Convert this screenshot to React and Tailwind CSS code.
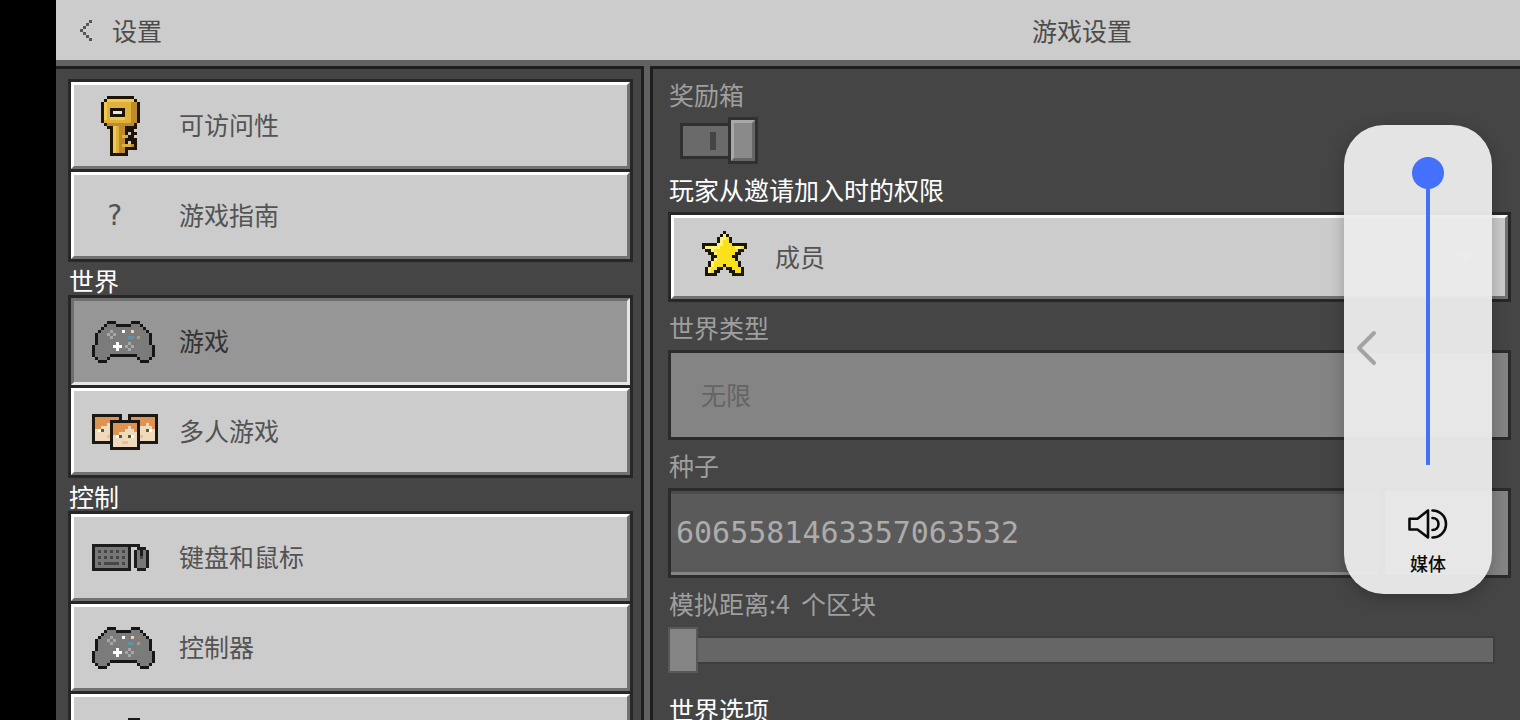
import { useState } from 'react'

const KEY = [
  '.....KKKKKKKKK..',
  '....KyyyyyyyyyK.',
  '...KyYYYYYYYYooK',
  '...KyYYYYYYYYooK',
  '...KyYKKKKKYYooK',
  '...KyYKWWWKYYooK',
  '...KyYKKKKKYYooK',
  '...KyYyyyyyYYooK',
  '...KYYYYYYYYYooK',
  '....KoooooooooK.',
  '.....KKyYooKKKK.',
  '......KyYooKKK..',
  '......KyYooK.KK.',
  '......KyYoYYKK..',
  '......KyYooKKKK.',
  '......KyYooK.KK.',
  '......KyYoYYYoK.',
  '......KyYooKKKK.',
  '......KyYooK....',
  '......KKKKKK....'
]

const GAMEPAD = [
  '.....KKK.....KKK.....',
  '....KGGGKKKKKGGGK....',
  '...KGGGGGGGGGGGGGK...',
  '..KGGGLGGGWGGOGRGGK..',
  '.KGGGLGLGGGGGGGGGGGK.',
  '.KGGGGLGGGGGBBGTGGGK.',
  '.KGGGGGGGGGGGGGGGGGK.',
  '.KGGGGGGWGGGLGGGGGGK.',
  'KGGGGGGWWWGLGLGGGGGGK',
  'KGGGGGGGWGGGLGGGGGGGK',
  'KGGGGGGGGGGGGGGGGGGGK',
  'KGGGGGKKKKKKKKKGGGGGK',
  '.KGGGK.........KGGGK.',
  '..KKK...........KKK..'
]

const FACES = [
  'KKKKKKKKKK..KKKKKKKKKK',
  'KOOOOOOOOK..KOOOOOOOOK',
  'KOOOOOKKKKKKKKKKOOOOOK',
  'KOOOOSKOOOOOOOOKOOSOOK',
  'KOOSSSKOOOOOSOOKSSSSOK',
  'KSWESSKOOOOSSSOKSSEWSK',
  'KSSSSSKOOSSSSSSKSSSSSK',
  'KSSSSPKSWESSEWSKPSSSSK',
  'KSSSSSKSSSSSSSSKSSSSSK',
  'KKKKKKKSSSPPSSSKKKKKKK',
  '......KSSSSSSSSK......',
  '......KKKKKKKKKK......'
]

const KEYBOARD = [
  'KKKKKKKKKKKKKKKK...',
  'KGGGGGGGGGGGK..KKK.',
  'KGDGDGDGDGDGK.KGKGK',
  'KGGGGGGGGGGGK.KGKGK',
  'KGDGDGDGDGDGK.KGDGK',
  'KGGGGGGGGGGGK.KGGGK',
  'KGDGDDDDDGDGK.KGGGK',
  'KGGGGGGGGGGGK.KGGGK',
  'KKKKKKKKKKKKK..KKK.'
]

const TOUCH = [
  '............KKKK....',
  '...........KSSSSK...',
  '...........KSSSSK...',
  '...........KSSSSK...',
  '...........KSSSSK...',
  '........KKKKSSSSKKK.',
  '.......KSSSSSSSSSSSK',
  '.......KSSSSSSSSSSSK',
  '.......KSSSSSSSSSSSK',
  '........KSSSSSSSSSK.',
  '........KSSSSSSSSSK.',
  '.........KSSSSSSSK..',
  '.........KKKKKKKKK..'
]

const STAR = [
  '.......K.......',
  '......KyK......',
  '.....KyyYK.....',
  '.....KyYYK.....',
  'KKKKKyyYYYKKKKK',
  'KyyyyyYYYYYyyYK',
  '.KKyYYYYYYYYKK.',
  '..KKyYYYYYYKK..',
  '...KKYYYYYKK...',
  '...KyYYYYYYK...',
  '..KyYYYYYYYYK..',
  '..KyYYYKYYYYK..',
  '.KyYYKK.KKYYYK.',
  '.KyYKK...KKYYK.',
  '.KKKK.....KKKK.'
]

const BACK = ['...K', '..K.', '.K..', 'K...', '.K..', '..K.', '...K']
const CARET = ['KKKKK', '.KKK.', '..K..']

const gold = { K: '#1e1405', y: '#efca4f', Y: '#dfb03a', o: '#bd8a2c', W: '#e6e6e6' }
const yellow = { K: '#1a1606', y: '#fff27a', Y: '#fbe11c' }
const pad = { K: '#161616', G: '#7b7b7b', L: '#a6a6a6', W: '#ffffff', O: '#f3cfae', R: '#a5705e', B: '#5f93a6', T: '#a89a8c' }
const face = { K: '#1b1813', O: '#df9350', S: '#f0dabb', W: '#ffffff', E: '#4f6132', P: '#f0b9a0' }
const keys = { K: '#1c1c1c', G: '#777777', D: '#464646' }

// Draws a sprite from rows of palette letters, '.' is transparent
function Sprite({ rows, palette, className = '', cell = 3 }) {
  const cols = rows[0].length
  return (
    <svg
      width={cols * cell}
      height={rows.length * cell}
      viewBox={`0 0 ${cols} ${rows.length}`}
      shapeRendering="crispEdges"
      className={`shrink-0 ${className}`}
      aria-hidden="true"
    >
      {rows.map((row, y) =>
        [...row].map((c, x) =>
          c === '.' ? null : <rect key={`${x}-${y}`} x={x} y={y} width="1" height="1" fill={palette[c]} />
        )
      )}
    </svg>
  )
}

const groups = [
  {
    items: [
      { id: 'accessibility', label: '可访问性', icon: <Sprite rows={KEY} palette={gold} /> },
      {
        id: 'guide',
        label: '游戏指南',
        icon: <span className="pl-[14px] font-['DejaVu_Sans_Mono',monospace] text-[28px]">?</span>
      }
    ]
  },
  {
    title: '世界',
    items: [
      { id: 'game', label: '游戏', icon: <Sprite rows={GAMEPAD} palette={pad} /> },
      { id: 'multiplayer', label: '多人游戏', icon: <Sprite rows={FACES} palette={face} /> }
    ]
  },
  {
    title: '控制',
    items: [
      { id: 'keyboard', label: '键盘和鼠标', icon: <Sprite rows={KEYBOARD} palette={keys} /> },
      { id: 'controller', label: '控制器', icon: <Sprite rows={GAMEPAD} palette={pad} /> },
      { id: 'touch', icon: <Sprite rows={TOUCH} palette={face} /> }
    ]
  }
]

function NavButton({ item, active, onSelect }) {
  return (
    <button
      type="button"
      onClick={() => onSelect(item.id)}
      className={`flex h-[87px] w-full shrink-0 items-center border-[3px] pl-[18px] text-left ${
        active
          ? 'border-t-[#6e6e6e] border-r-[#e6e6e6] border-b-[#e6e6e6] border-l-[#6e6e6e] bg-[#969696] text-[#333333]'
          : 'border-t-white border-r-[#717171] border-b-[#717171] border-l-white bg-[#cccccc] text-[#535353]'
      }`}
    >
      <span className="flex w-[87px] shrink-0 items-center">{item.icon}</span>
      {item.label && <span className="pb-1">{item.label}</span>}
    </button>
  )
}

function Sidebar() {
  const [active, setActive] = useState('game')

  return (
    <nav className="w-[588px] shrink-0 overflow-hidden border-t-[3px] border-r-[3px] border-[#1e1e1e] bg-[#454545] pt-[10px] pr-2 pl-3">
      {groups.map((group, i) => (
        <section key={i}>
          {group.title && <h2 className="flex h-[33px] items-center pt-[2px] pl-px text-white">{group.title}</h2>}
          <div className="flex flex-col gap-[3px] bg-[#272727] p-[3px]">
            {group.items.map((item) => (
              <NavButton key={item.id} item={item} active={item.id === active} onSelect={setActive} />
            ))}
          </div>
        </section>
      ))}
    </nav>
  )
}

function FieldLabel({ htmlFor, bright, children }) {
  return (
    <label
      htmlFor={htmlFor}
      className={`flex h-12 items-center pt-[2px] pl-px whitespace-pre ${bright ? 'text-white' : 'text-[#9f9f9f]'}`}
    >
      {children}
    </label>
  )
}

function GameSettings() {
  const [seed, setSeed] = useState('6065581463357063532')
  const [distance, setDistance] = useState(4)

  return (
    <main className="min-w-0 flex-1 overflow-hidden border-t-[3px] border-l-[3px] border-[#1e1e1e] bg-[#454545] pr-[9px] pl-[15px]">
      <FieldLabel htmlFor="bonus">奖励箱</FieldLabel>
      <label htmlFor="bonus" className="flex h-[47px] items-center pl-3">
        <input id="bonus" type="checkbox" defaultChecked disabled className="sr-only" />
        <span className="flex h-9 w-12 items-center justify-end border-[3px] border-r-0 border-[#303030] bg-[#6a6a6a] pr-3">
          <span className="h-[18px] w-[6px] bg-[#454545]" />
        </span>
        <span className="h-[47px] w-[30px] border-[3px] border-[#303030] bg-[#8a8a8a]">
          <span className="block h-full border-[3px] border-t-[#a8a8a8] border-r-[#666666] border-b-[#666666] border-l-[#a8a8a8]" />
        </span>
      </label>

      <FieldLabel htmlFor="permission" bright>玩家从邀请加入时的权限</FieldLabel>
      <div className="border-[3px] border-[#272727]">
        <div className="flex h-[84px] items-center border-[3px] border-t-white border-r-[#717171] border-b-[#717171] border-l-white bg-[#cccccc] pr-8 pl-7">
          <Sprite rows={STAR} palette={yellow} className="mb-2" />
          <select id="permission" className="ml-7 h-full min-w-0 flex-1 appearance-none bg-transparent pb-[2px] text-[#535353]">
            <option>成员</option>
          </select>
          <Sprite rows={CARET} palette={{ K: '#ffffff' }} />
        </div>
      </div>

      <FieldLabel htmlFor="world-type">世界类型</FieldLabel>
      <div className="border-[3px] border-[#2b2b2b]">
        <select
          id="world-type"
          disabled
          className="block h-[84px] w-full appearance-none bg-[#848484] pb-[2px] pl-[30px] text-[#646464] opacity-100"
        >
          <option>无限</option>
        </select>
      </div>

      <FieldLabel htmlFor="seed">种子</FieldLabel>
      <div className="flex gap-[6px] border-[3px] border-[#2b2b2b] bg-[#2b2b2b]">
        <input
          id="seed"
          type="text"
          value={seed}
          onChange={(e) => setSeed(e.target.value)}
          className="h-[84px] min-w-0 flex-1 border-t-[3px] border-b-[3px] border-t-[#4b4b4b] border-b-[#858585] bg-[#5a5a5a] px-[5px] pb-[2px] font-['DejaVu_Sans_Mono',monospace] text-[30px] text-[#acacac]"
        />
        <button type="button" disabled aria-label="种子" className="w-[123px] shrink-0 bg-[#848484]" />
      </div>

      <FieldLabel htmlFor="distance">模拟距离:{distance}{'  '}个区块</FieldLabel>
      <input
        id="distance"
        type="range"
        min="4"
        max="12"
        value={distance}
        onChange={(e) => setDistance(Number(e.target.value))}
        className="mb-[10px] block h-12 w-full appearance-none bg-transparent pr-4 [&::-webkit-slider-runnable-track]:h-[28px] [&::-webkit-slider-runnable-track]:border-y-[2px] [&::-webkit-slider-runnable-track]:border-r-[2px] [&::-webkit-slider-runnable-track]:border-[#3e3e3e] [&::-webkit-slider-runnable-track]:bg-[#666666] [&::-webkit-slider-thumb]:-mt-[11px] [&::-webkit-slider-thumb]:h-[46px] [&::-webkit-slider-thumb]:w-[30px] [&::-webkit-slider-thumb]:appearance-none [&::-webkit-slider-thumb]:border-[2px] [&::-webkit-slider-thumb]:border-[#585858] [&::-webkit-slider-thumb]:bg-[#848484]"
      />

      <h2 className="flex h-12 items-center pt-[2px] pl-px text-white">世界选项</h2>
    </main>
  )
}

function VolumePanel() {
  const [volume, setVolume] = useState(100)

  return (
    <aside className="absolute top-[125px] right-7 flex rounded-[40px] bg-[#ebebeb]/96 pr-4 shadow-[0_4px_16px_rgba(0,0,0,0.25)]">
      <button type="button" aria-label="展开" className="mb-6 w-9 pl-3">
        <svg width="22" height="36" viewBox="0 0 22 36" fill="none" stroke="#a3a3a3" strokeWidth="4" strokeLinecap="round" strokeLinejoin="round">
          <path d="M18 3 3 18l15 15" />
        </svg>
      </button>
      <div className="flex w-24 flex-col items-center pt-8 pb-[18px]">
        <input
          id="volume"
          type="range"
          value={volume}
          onChange={(e) => setVolume(Number(e.target.value))}
          className="h-[308px] w-8 appearance-none rounded-full bg-linear-to-b from-[#4272f5] to-[#4272f5] bg-size-[4px_100%] bg-center bg-no-repeat [direction:rtl] [writing-mode:vertical-lr] [&::-webkit-slider-thumb]:size-8 [&::-webkit-slider-thumb]:appearance-none [&::-webkit-slider-thumb]:rounded-full [&::-webkit-slider-thumb]:bg-[#4470fc]"
        />
        <svg className="mt-[43px]" width="40" height="32" viewBox="0 0 40 32" fill="none" stroke="#0a0a0a" strokeWidth="2.6" strokeLinejoin="round" strokeLinecap="round">
          <path d="M1.5 10.8h8L20 2.5v27L9.500 21.500h-8z" />
          <path d="M24.500 2.500c7.500 0 13.500 6 13.500 13.500s-6 13.500-13.500 13.500" />
          <path d="M24.500 10c3.500 0 6 2.700 6 6s-2.500 6-6 6" />
        </svg>
        <label htmlFor="volume" className="mt-[10px] text-[18px] leading-[26px] font-medium text-[#0a0a0a]">媒体</label>
      </div>
    </aside>
  )
}

const App = () => {
  return (
    <div className="relative flex h-screen flex-col overflow-hidden border-l-[56px] border-black bg-[#616161] font-['Noto_Sans_CJK_SC',sans-serif] text-[25px] leading-8">
      <header className="flex h-[60px] shrink-0 items-center bg-[#cccccc] text-[#4c4c4c]">
        <a href="#back" className="flex w-[594px] shrink-0 items-center gap-5 pl-6">
          <Sprite rows={BACK} palette={{ K: '#565656' }} />
          设置
        </a>
        <h1 className="flex-1 pr-[6px] text-center">游戏设置</h1>
      </header>

      <div className="mt-[6px] flex min-h-0 flex-1 gap-[6px]">
        <Sidebar />
        <GameSettings />
      </div>

      <VolumePanel />
    </div>
  )
}

export default App
